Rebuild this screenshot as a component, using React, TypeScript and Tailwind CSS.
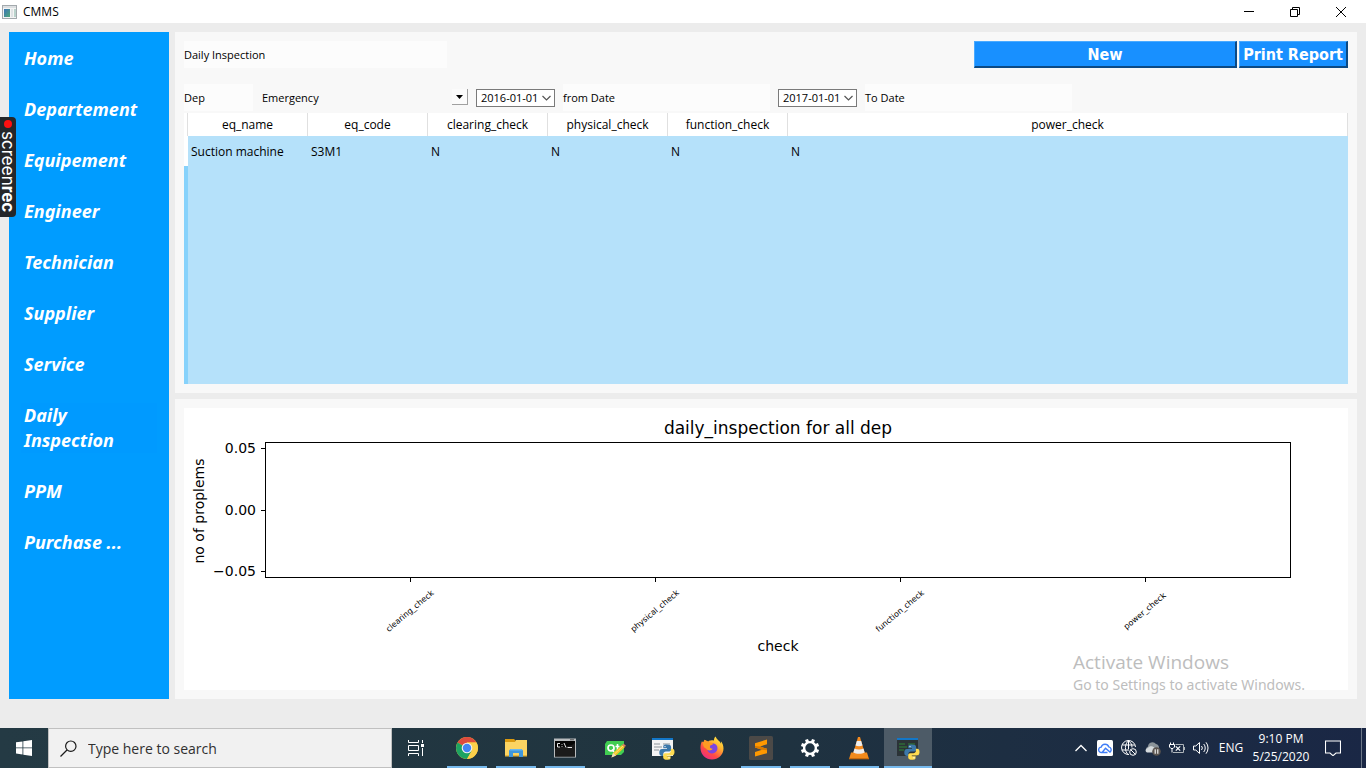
import React from "react";

const ui = "font-['Open_Sans','Noto_Sans',sans-serif]";

const navItems = [
  "Home",
  "Departement",
  "Equipement",
  "Engineer",
  "Technician",
  "Supplier",
  "Service",
  "Daily Inspection",
  "PPM",
  "Purchase ...",
];

const columns = ["eq_name", "eq_code", "clearing_check", "physical_check", "function_check", "power_check"];
const rows = [["Suction machine", "S3M1", "N", "N", "N", "N"]];

function TitleBar() {
  return (
    <header className="flex h-[23px] shrink-0 items-center bg-white text-black">
      <svg className="ml-[2px] h-[14px] w-[15px]" viewBox="0 0 15 14">
        <defs>
          <linearGradient id="appIcon" x1="0" y1="0" x2="1" y2="1">
            <stop offset="0" stopColor="#3b74b8" />
            <stop offset="1" stopColor="#4fa878" />
          </linearGradient>
        </defs>
        <rect x="0.5" y="0.5" width="14" height="13" fill="#f4f4f4" stroke="#a3a9ad" />
        <path d="M1 2h13" stroke="#c4cace" />
        <rect x="2" y="4" width="6" height="8" fill="url(#appIcon)" />
        <rect x="9" y="4" width="2" height="8" fill="#dfe3e5" />
        <rect x="12" y="4" width="2" height="8" fill="#b9d3cc" />
      </svg>
      <h1 className="ml-[6px] flex-1 text-[12px] leading-[16px]">CMMS</h1>
      <button aria-label="Minimize" className="flex h-full w-[46px] items-center justify-center">
        <svg className="h-[10px] w-[10px]" viewBox="0 0 10 10"><path d="M0 4.5h10" stroke="#000" /></svg>
      </button>
      <button aria-label="Restore" className="flex h-full w-[46px] items-center justify-center">
        <svg className="h-[10px] w-[10px]" viewBox="0 0 10 10" fill="none" stroke="#000">
          <path d="M0.5 2.5h7v7h-7zM2.5 2.5v-2h7v7h-2" />
        </svg>
      </button>
      <button aria-label="Close" className="mr-[2px] flex h-full w-[46px] items-center justify-center">
        <svg className="h-[10px] w-[10px]" viewBox="0 0 10 10"><path d="M0 0l10 10M10 0L0 10" stroke="#000" /></svg>
      </button>
    </header>
  );
}

function Sidebar() {
  return (
    <nav className="flex w-[160px] shrink-0 flex-col gap-[26px] bg-[#009cff] px-[12px] py-[14px] font-['Noto_Sans',sans-serif]">
      {navItems.map((item) => (
        <a
          key={item}
          href="#"
          aria-current={item === "Daily Inspection" ? "page" : undefined}
          className="px-[3px] text-[18px] leading-[25px] font-bold text-white italic aria-[current=page]:bg-[#009aff]"
        >
          {item}
        </a>
      ))}
    </nav>
  );
}

function DateField({ id, value }: { id: string; value: string }) {
  return (
    <div className="flex h-[18px] w-[79px] shrink-0 items-center border border-[#7a7a7a] bg-white">
      <input id={id} defaultValue={value} className="h-full min-w-0 flex-1 bg-transparent pl-[4px] text-[11px] outline-none" />
      <button type="button" aria-label="Open calendar" className="flex h-full w-[16px] items-center justify-center">
        <svg className="h-[6px] w-[9px]" viewBox="0 0 9 6"><path d="M0.5 1l4 4 4-4" fill="none" stroke="#555" strokeWidth="1.2" /></svg>
      </button>
    </div>
  );
}

const fieldLabel = "flex h-[27px] items-center bg-[#fcfcfc] pt-[2px]";

function Filters() {
  return (
    <form className="mt-[16px] flex items-center text-[11px]">
      <label htmlFor="dep" className={`w-[69px] ${fieldLabel}`}>Dep</label>
      <div className="relative ml-[6px] w-[209px]">
        <select id="dep" className="h-[27px] w-full appearance-none bg-transparent pt-[2px] pl-[3px] outline-none">
          <option>Emergency</option>
        </select>
        <span className="pointer-events-none absolute top-[5px] right-0 flex h-[16px] w-[16px] items-center justify-center border-r border-b border-[#a0a0a0] bg-[#fbfbfb]">
          <svg className="h-[4px] w-[7px]" viewBox="0 0 7 4"><path d="M0 0h7L3.5 4z" fill="#000" /></svg>
        </span>
      </div>
      <div className="ml-[8px] flex items-center gap-[8px]">
        <DateField id="from" value="2016-01-01" />
        <label htmlFor="from" className={`w-[207px] ${fieldLabel}`}>from Date</label>
        <DateField id="to" value="2017-01-01" />
        <label htmlFor="to" className={`w-[207px] ${fieldLabel}`}>To Date</label>
      </div>
    </form>
  );
}

function InspectionTable() {
  return (
    <div className="mt-[2px] flex min-h-[271px] flex-1 flex-col">
      <table className="w-full table-fixed border-separate border-spacing-0 text-[12px] leading-[16px] text-black">
        <colgroup>
          <col className="w-[4px]" />
          <col className="w-[120px]" />
          <col className="w-[120px]" />
          <col className="w-[120px]" />
          <col className="w-[120px]" />
          <col className="w-[120px]" />
          <col />
        </colgroup>
        <thead>
          <tr className="h-[23px] bg-white">
            <td className="border-r border-[#e0e0e0] p-0" />
            {columns.map((c) => (
              <th key={c} scope="col" className="border-r border-[#e0e0e0] p-0 pt-px font-normal">{c}</th>
            ))}
          </tr>
        </thead>
        <tbody>
          {rows.map((r) => (
            <tr key={r[0]} className="h-[30px] bg-[#b5e1fa]">
              <td className="bg-white p-0" />
              {r.map((cell, i) => (
                <td key={columns[i]} className="p-0 pt-[2px] pl-[3px]">{cell}</td>
              ))}
            </tr>
          ))}
        </tbody>
      </table>
      <div className="flex-1 border-l-4 border-[#87d2fb] bg-[#b5e1fa]" />
    </div>
  );
}

const yTicks = [
  { y: 40.5, label: "0.05" },
  { y: 102.5, label: "0.00" },
  { y: 163.5, label: "−0.05" },
];
const xTicks = [
  { x: 226.5, label: "clearing_check" },
  { x: 471.5, label: "physical_check" },
  { x: 716.5, label: "function_check" },
  { x: 961.5, label: "power_check" },
];

function Chart() {
  return (
    <svg
      role="img"
      aria-label="daily_inspection for all dep"
      viewBox="0 0 1164 282"
      className="block w-full bg-white font-['DejaVu_Sans',sans-serif]"
    >
      <text x="594" y="26" textAnchor="middle" fontSize="17">daily_inspection for all dep</text>
      <rect x="81.5" y="34.5" width="1025" height="135" fill="none" stroke="#000" />
      {yTicks.map((t) => (
        <g key={t.label}>
          <path d={`M77 ${t.y}h4`} stroke="#000" />
          <text x="72" y={t.y + 4.5} textAnchor="end" fontSize="14">{t.label}</text>
        </g>
      ))}
      {xTicks.map((t) => (
        <g key={t.label}>
          <path d={`M${t.x} 170v4`} stroke="#000" />
          <text transform={`translate(${t.x + 1} 205) rotate(-40)`} textAnchor="middle" fontSize="8">{t.label}</text>
        </g>
      ))}
      <text transform="translate(20 103) rotate(-90)" textAnchor="middle" fontSize="14">no of proplems</text>
      <text x="594" y="243" textAnchor="middle" fontSize="14">check</text>
    </svg>
  );
}

const chromeIcon = (
  <svg viewBox="0 0 24 24" className="h-[24px] w-[24px]">
    <circle cx="12" cy="12" r="11" fill="#fbc934" />
    <path d="M12 12L2.5 6.5A11 11 0 0 1 21.5 6.5H12z" fill="#dd4b3e" />
    <path d="M12 12L2.5 6.5A11 11 0 0 0 12 23l4.8-8.3z" fill="#1da362" />
    <path d="M12 6.5h9.5A11 11 0 0 1 12 23l4.8-8.3z" fill="#fcd04b" />
    <circle cx="12" cy="12" r="5.3" fill="#f1f1f1" />
    <circle cx="12" cy="12" r="4.2" fill="#4285f4" />
  </svg>
);

const folderIcon = (
  <svg viewBox="0 0 24 24" className="h-[24px] w-[24px]">
    <path d="M1 3h9l2 2v4H1z" fill="#dc9a0f" />
    <path d="M1 6h10l1-2h11v16H1z" fill="#fcd462" />
    <path d="M1 19h22v1.5H1z" fill="#e9b63a" />
    <path d="M5 21v-6.500l1.500-1.500h11L19 14.500V21h-4v-4H9v4z" fill="#3f97dc" />
    <path d="M6.500 13h11l1 1.500h-13z" fill="#6bb8ee" />
  </svg>
);

const terminalIcon = (
  <svg viewBox="0 0 24 24" className="h-[24px] w-[24px]">
    <rect x="1" y="2.500" width="22" height="19" fill="#b9bcbe" />
    <rect x="2" y="5" width="20" height="15.500" fill="#050505" />
    <path d="M2 13c6-4 14-1 20-6v13.500H2z" fill="#1b1b1b" />
    <path d="M17 3.800h4" stroke="#555" />
    <path d="M7 7.500H4.500v3.500H7M9 8v.8M9 10.200v.8M11 7l2 4.500M14.500 11.500h4.500" stroke="#fff" fill="none" strokeWidth="0.900" />
  </svg>
);

const qtIcon = (
  <svg viewBox="0 0 24 24" className="h-[24px] w-[24px]">
    <path d="M5 5h17v11l-3 3H3V8z" fill="#41cd52" />
    <circle cx="9" cy="12" r="3" fill="none" stroke="#fff" strokeWidth="1.700" />
    <path d="M10 13.500l2 2.500M15.500 8v7M13.500 10.500h4" stroke="#fff" strokeWidth="1.600" />
    <path d="M20 9l3 2-9 8.500-4.500 2 1.500-4.500z" fill="#f2c62b" />
    <path d="M20 9l1.500-1.200 2.300 1.800L23 11z" fill="#e27a62" />
    <path d="M11 17l3 2.500-4.500 2z" fill="#f0dcc0" />
    <path d="M21 10l-8.500 8" stroke="#fbe477" />
  </svg>
);

function Python({ dark }: { dark?: boolean }) {
  return (
    <svg viewBox="0 0 24 24" className="h-[24px] w-[24px]">
      <rect x="1" y="2" width="21" height="18" fill={dark ? "#2b3337" : "#f4f4f4"} />
      <rect x="1" y="2" width="21" height="2" fill="#1377c8" />
      <path d="M3 8h6M3 11h8M3 14h5M12 8h7" stroke={dark ? "#2f6b39" : "#aeb4b8"} strokeWidth="1.300" />
      <path d="M15.500 8.500c-3 0-3.200 1-3.200 2.400v1.300H16v.8h-5c-2 0-2.700 1.500-2.700 3.600s.8 3.300 2.500 3.300h1.500v-2c0-1.600 1.200-2.500 2.600-2.500h3.300c1.300 0 1.900-.9 1.900-2v-2.500c0-1.700-1.600-2.400-4.600-2.400z" fill="#3c78aa" />
      <path d="M16.200 23.800c3 0 3.400-1 3.400-2.300v-1.300h-3.800v-.8h5c2 0 2.700-1.400 2.700-3.400s-.8-3.200-2.400-3.200h-1.200v2c0 1.500-1.200 2.400-2.500 2.400h-3.200c-1.300 0-2 .9-2 2v2.300c0 1.600 1.600 2.300 4 2.300z" fill="#ffdc51" />
      <circle cx="14" cy="10.600" r="0.700" fill="#fff" />
      <circle cx="18" cy="21.800" r="0.700" fill="#fff" />
    </svg>
  );
}

const firefoxIcon = (
  <svg viewBox="0 0 24 24" className="h-[24px] w-[24px]">
    <defs>
      <linearGradient id="fox" x1="0.900" y1="0" x2="0.200" y2="1">
        <stop offset="0" stopColor="#fff04d" />
        <stop offset="0.350" stopColor="#ffb52e" />
        <stop offset="0.700" stopColor="#ff4a45" />
        <stop offset="1" stopColor="#e8288c" />
      </linearGradient>
    </defs>
    <path d="M15.500 0.500c-1 1-1.600 2.400-1.500 4-2-.6-3.500-.4-5 .3L8.200 5.600 4.500 3.800C4 4.600 3.700 5.400 3.800 6.200L1.800 5.500C0.500 8.500.4 10.500.5 12.500.8 19 6 23.500 12 23.500S23.500 19 23.500 12.500c0-3-1-5.500-2.600-7.300l.2 2.500c-1.200-3-4.600-4-5.600-7.200z" fill="url(#fox)" />
    <path d="M8 9.500c2-3 7-3.500 9 .5 1.500 3.500-1 7.500-5 7.500s-6-4-4-8z" fill="#7b45e0" />
    <path d="M3 7l1.500-3L9 6.500c1.700 0 3.500.3 4.300 1.300-.6 1.200-2.800 1.200-3.300 2.200-.5 1.600.5 2.800 2.700 2.800-1.500 2.400-5.200 2-6.700-.3C4 12 2.800 9.500 3 7z" fill="#ff9a22" />
  </svg>
);

const sublimeIcon = (
  <svg viewBox="0 0 24 24" className="h-[24px] w-[24px]">
    <rect width="24" height="24" rx="1.500" fill="#4b4947" />
    <path d="M18 3.500v4.700l-7 2.300 7 2.200v4.500L6 20.500V16l7-2.200-7-2.300V7.200z" fill="#ff9800" />
    <path d="M6 11.500V10l5 .5 7 2.200v1.500l-5-.4z" fill="#d87900" />
  </svg>
);

const gearTeeth = [0, 45, 90, 135, 180, 225, 270, 315];
const gearIcon = (
  <svg viewBox="0 0 24 24" className="h-[24px] w-[24px]">
    <circle cx="12" cy="12" r="5.900" fill="none" stroke="#fff" strokeWidth="2.400" />
    {gearTeeth.map((a) => (
      <rect key={a} x="10.400" y="2.800" width="3.200" height="3.400" fill="#fff" transform={`rotate(${a + 22.5} 12 12)`} />
    ))}
  </svg>
);

const vlcIcon = (
  <svg viewBox="0 0 24 24" className="h-[24px] w-[24px]">
    <path d="M4 16.500h16l2 6.500H2z" fill="#f08a1c" />
    <path d="M11 1h2l5 17c-2 2-10 2-12 0z" fill="#f58b1f" />
    <path d="M9.800 5h4.400l1.300 4.500c-1.800 1-5.200 1-7 0z" fill="#eee" />
    <path d="M7.500 12.500c2.500 1.300 6.500 1.300 9 0l1.200 4c-3 1.800-8.400 1.800-11.400 0z" fill="#ececec" />
    <path d="M2 22h20v1.300H2z" fill="#c96b0d" />
  </svg>
);

const apps = [
  { name: "Google Chrome", icon: chromeIcon, open: true },
  { name: "File Explorer", icon: folderIcon, open: true },
  { name: "Command Prompt", icon: terminalIcon, open: true },
  { name: "Qt Designer", icon: qtIcon, open: false },
  { name: "Python IDLE", icon: <Python />, open: false },
  { name: "Firefox", icon: firefoxIcon, open: false },
  { name: "Sublime Text", icon: sublimeIcon, open: true },
  { name: "Settings", icon: gearIcon, open: true },
  { name: "VLC", icon: vlcIcon, open: true },
];

const tray = [
  {
    name: "Show hidden icons",
    icon: <path d="M2.500 11L8 5.500l5.500 5.500" strokeWidth="1.300" />,
  },
  {
    name: "Cloud sync",
    icon: (
      <>
        <rect x="0" y="0" width="16" height="16" rx="1.500" fill="#fff" stroke="none" />
        <path d="M10.500 12.500H4.500a2.700 2.700 0 0 1-.3-5.400 4 4 0 0 1 7.600-.2 2.900 2.900 0 0 1 1.200 5.200L8.500 8.200 5.500 12" stroke="#3f7df6" strokeWidth="1.400" />
      </>
    ),
  },
  {
    name: "Network",
    icon: (
      <>
        <path d="M14.500 7A7 7 0 1 0 8 14.500M7.500.8C3.500 4 3.500 11 7 14.500M7.500.8C10 2.500 11 5 11 7.500M1.200 5h12.600M1 10h7M7.500.8V9" />
        <circle cx="12" cy="12" r="3.300" />
        <path d="M9.800 9.800l4.400 4.400" />
      </>
    ),
  },
  {
    name: "OneDrive paused",
    icon: (
      <>
        <path d="M3 12a3 3 0 0 1 0-5.500A4.500 4.500 0 0 1 11 4a4 4 0 0 1 3 4v4z" fill="#8b949a" stroke="none" />
        <path d="M2 12.500c-2-1-2-4 1-4.500 1-2.500 5-2.500 6.500 0v4.500z" fill="#d5dadd" stroke="none" />
        <circle cx="11.500" cy="11.500" r="4.300" fill="#5b5550" stroke="none" />
        <path d="M10.200 9.300v4.400M12.800 9.300v4.400" strokeWidth="1.100" />
      </>
    ),
  },
  {
    name: "Battery",
    icon: (
      <>
        <path d="M1.500 2.500v2M4.500 2.500v2M.5 4.500h5v2.500l-1.500 1.500h-2L.5 7zM3 8.500v4" />
        <path d="M6.500 4.500h8v8H4M15.500 7v3" stroke="#aeb5ba" />
        <path d="M6.800 6.300l4.400 4.400M11.200 6.300l-4.400 4.400" strokeWidth="1.200" />
      </>
    ),
  },
  {
    name: "Volume",
    icon: <path d="M.5 6h2.300L6.500 2.500v11L2.800 10H.5zM8.500 6a3 3 0 0 1 0 4M10.700 4a6 6 0 0 1 0 8M13 2.300a9 9 0 0 1 0 11.400" />,
  },
];

function Taskbar() {
  return (
    <footer className="flex h-[40px] shrink-0 items-stretch bg-gradient-to-r from-[#243a44] via-[#20343f] to-[#1a2745] text-white">
      <button aria-label="Start" className="flex w-[48px] items-center justify-center">
        <svg className="h-[16px] w-[16px]" viewBox="0 0 16 16" fill="#fff">
          <path d="M0 2.300L6.500 1.400V7.500H0zM7.300 1.300L16 0v7.500H7.300zM0 8.300h6.500v6.200L0 13.600zM7.300 8.300H16V16l-8.700-1.300z" />
        </svg>
      </button>
      <label className="flex w-[344px] items-center border border-[#c0c0c0] bg-[#f1f1f1] pl-[11px]">
        <svg className="h-[17px] w-[17px]" viewBox="0 0 17 17" fill="none" stroke="#1a1a1a" strokeWidth="1.200">
          <circle cx="10.800" cy="6.200" r="5.200" />
          <path d="M7 10L0.500 16.500" />
        </svg>
        <input
          aria-label="Search"
          placeholder="Type here to search"
          className="ml-[11px] min-w-0 flex-1 bg-transparent text-[14px] outline-none placeholder:text-[#303030]"
        />
      </label>
      <button aria-label="Task View" className="mr-[3px] flex w-[48px] items-center justify-center">
        <svg className="h-[16px] w-[16px]" viewBox="0 0 16 16" fill="none" stroke="#fff">
          <path d="M.5 0v2.500h10V0M.5 5.500h10v5H.5zM.5 16v-2.500h10V16M14.500 0v3M14.500 8v8" />
          <path d="M13 4h3v3h-3z" fill="#fff" stroke="none" />
        </svg>
      </button>
      <div className="flex gap-px">
        {apps.map((a) => (
          <button key={a.name} aria-label={a.name} className="flex w-[48px] flex-col items-center">
            <span className="flex flex-1 items-center pt-px">{a.icon}</span>
            <span className={a.open ? "h-[2px] w-[40px] bg-[#76b9ed]" : "h-[2px] w-[40px]"} />
          </button>
        ))}
        <button aria-label="CMMS" className="flex w-[48px] flex-col items-center bg-[#4d5b67]">
          <span className="flex flex-1 items-center pt-px"><Python dark /></span>
          <span className="h-[2px] w-full bg-[#76b9ed]" />
        </button>
      </div>
      <div className="ml-auto flex items-center">
        {tray.map((t) => (
          <button key={t.name} aria-label={t.name} className="flex h-full w-[24px] items-center justify-center">
            <svg className="h-[16px] w-[16px]" viewBox="0 0 16 16" fill="none" stroke="#fff">{t.icon}</svg>
          </button>
        ))}
        <button className="h-full w-[36px] text-[12px]">ENG</button>
        <button className="w-[64px] text-[12px] leading-[18px] whitespace-nowrap">
          <time>9:10 PM<br />5/25/2020</time>
        </button>
        <button aria-label="Notifications" className="flex h-full w-[40px] items-center justify-center">
          <svg className="h-[16px] w-[16px]" viewBox="0 0 16 16" fill="none" stroke="#fff" strokeWidth="1.100">
            <path d="M.5 1h15v12H11l-3 2.700L5 13H.5z" />
          </svg>
        </button>
        <button aria-label="Show desktop" className="ml-[8px] h-full w-[5px] border-l border-[#6c7787]" />
      </div>
    </footer>
  );
}

const action =
  "h-[27px] border-t border-r-2 border-b-2 border-l border-t-[#4aaaff] border-r-[#0c4a84] border-b-[#0c4a84] border-l-[#4aaaff] bg-[#1890ff] pt-px text-center text-[16px] leading-[22px] font-bold whitespace-nowrap text-white";

export default function App() {
  return (
    <div className={`relative flex min-h-screen flex-col bg-[#ececec] text-black ${ui}`}>
      <TitleBar />
      <div className="flex flex-1 gap-[6px] px-[9px] pt-[9px] pb-[29px]">
        <Sidebar />
        <main className="flex min-w-0 flex-1 flex-col gap-[6px]">
          <section className="flex flex-1 flex-col bg-[#f8f8f8] p-[9px]">
            <div className="flex items-center">
              <h2 className={`w-[263px] text-[11px] ${fieldLabel}`}>Daily Inspection</h2>
              <div className="ml-auto flex gap-[2px] font-['DejaVu_Sans_Condensed','Noto_Sans',sans-serif]">
                <button className={`w-[263px] ${action}`}>New</button>
                <button className={`w-[109px] ${action}`}>Print Report</button>
              </div>
            </div>
            <Filters />
            <InspectionTable />
          </section>
          <section className="bg-[#f8f8f8] p-[9px]">
            <Chart />
          </section>
        </main>
      </div>
      <Taskbar />
      <aside className="absolute top-[117px] left-0 flex h-[100px] w-[16px] flex-col items-center rounded-r-[4px] bg-[#25272a] pt-[3px] text-white">
        <span className="h-[8px] w-[8px] shrink-0 rounded-full bg-[#ff1010]" />
        <span className="mt-[3px] font-['Inter',sans-serif] text-[17px] leading-[16px] [writing-mode:vertical-rl]">
          screen<b>rec</b>
        </span>
      </aside>
      <aside className="pointer-events-none absolute right-[57px] bottom-[73px] w-[236px] whitespace-nowrap text-[#bdbdbd]">
        <p className="text-[19px] leading-[26px]">Activate Windows</p>
        <p className="font-['Noto_Sans',sans-serif] text-[14px] leading-[20px]">Go to Settings to activate Windows.</p>
      </aside>
    </div>
  );
}
